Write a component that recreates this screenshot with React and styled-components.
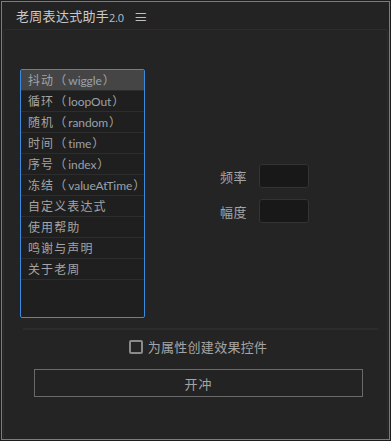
import React, { useState } from "react";
import styled, { createGlobalStyle } from "styled-components";

const Global = createGlobalStyle`
  html, body {
    margin: 0;
    padding: 0;
    background: #1d1d1d;
  }
  body {
    font-family: "Noto Sans CJK SC", sans-serif;
  }
`;

const Frame = styled.div`
  box-sizing: border-box;
  margin: 1px;
  width: 389px;
  height: 439px;
  border: 1px solid #3a8ae0;
  background: #232323;
  display: flex;
  flex-direction: column;
`;

const TitleBar = styled.div`
  height: 27px;
  display: flex;
  align-items: center;
  padding-left: 14px;
  color: #c9c9c9;
  font-size: 13px;
  letter-spacing: 0.3px;
`;

const Version = styled.span`
  font-family: "Open Sans", sans-serif;
  font-size: 11px;
  letter-spacing: -0.3px;
  margin-top: 3px;
  color: #b8c0cc;
`;

const Menu = styled.span`
  margin-left: 10px;
  font-size: 14px;
  color: #c0c0c0;
`;

const Panel = styled.div`
  flex: 1;
  margin: 0 1px;
  border: 1px solid #2c2c2c;
  border-bottom: none;
  border-radius: 3px 3px 0 0;
  background: #242424;
  padding: 39px 9px 0 16px;
  display: flex;
  flex-direction: column;
`;

const Top = styled.div`
  display: flex;
`;

const List = styled.div`
  box-sizing: border-box;
  width: 125px;
  height: 249px;
  border: 1px solid #3a8ae0;
  border-radius: 2px;
  background: #1f1f1f;
  display: flex;
  flex-direction: column;
  overflow: hidden;
`;

const Item = styled.div`
  height: 20px;
  flex-shrink: 0;
  border-bottom: 1px solid #2d2d2d;
  background: ${(p) => (p.active ? "#454545" : "transparent")};
  color: #a4a4a4;
  font-size: 12px;
  line-height: 20px;
  padding-left: 7px;
  white-space: nowrap;
  letter-spacing: 1.1px;
`;

const Latin = styled.span`
  font-family: "Lato", sans-serif;
  color: #9aa1aa;
  font-size: 12px;
  letter-spacing: -0.1px;
  margin: 0 1px 0 1px;
`;

const Params = styled.div`
  flex: 1;
  display: flex;
  flex-direction: column;
  justify-content: center;
  align-items: center;
  gap: 11px;
  padding-left: 6px;
`;

const Field = styled.label`
  display: flex;
  align-items: center;
  gap: 12px;
  color: #a4a4a4;
  font-size: 13px;
  letter-spacing: 0.4px;
`;

const Input = styled.input`
  box-sizing: border-box;
  width: 50px;
  height: 24px;
  background: #181818;
  border: 1px solid #333;
  border-radius: 3px;
  outline: none;
`;

const Divider = styled.div`
  height: 2px;
  background: #2c2c2c;
  margin: 10px 0 0 3px;
`;

const CheckRow = styled.label`
  display: flex;
  align-items: center;
  justify-content: center;
  gap: 5px;
  margin-top: 7px;
  color: #a4a4a4;
  font-size: 13px;
  letter-spacing: 0.3px;
  padding-right: 2px;
`;

const Box = styled.span`
  box-sizing: border-box;
  width: 14px;
  height: 14px;
  border: 2px solid #8a8a8a;
  border-radius: 2px;
`;

const Button = styled.button`
  box-sizing: border-box;
  margin: 13px 15px 0 14px;
  height: 28px;
  background: #232323;
  border: 1px solid #6a6a6a;
  color: #a4a4a4;
  font-family: "Noto Sans CJK SC", sans-serif;
  font-size: 13px;
  letter-spacing: 1px;
`;

const items = [
  ["抖动", "wiggle"],
  ["循环", "loopOut"],
  ["随机", "random"],
  ["时间", "time"],
  ["序号", "index"],
  ["冻结", "valueAtTime"],
  ["自定义表达式"],
  ["使用帮助"],
  ["鸣谢与声明"],
  ["关于老周"],
];

export default function App() {
  const [sel, setSel] = useState(0);
  return (
    <>
      <Global />
      <Frame>
        <TitleBar>
          老周表达式助手<Version>2.0</Version>
          <Menu>≡</Menu>
        </TitleBar>
        <Panel>
          <Top>
            <List>
              {items.map(([zh, en], i) => (
                <Item key={i} active={i === sel} onClick={() => setSel(i)}>
                  {zh}
                  {en && (
                    <>
                      （<Latin>{en}</Latin>）
                    </>
                  )}
                </Item>
              ))}
            </List>
            <Params>
              <Field>
                频率 <Input />
              </Field>
              <Field>
                幅度 <Input />
              </Field>
            </Params>
          </Top>
          <Divider />
          <CheckRow>
            <Box />
            为属性创建效果控件
          </CheckRow>
          <Button>开冲</Button>
        </Panel>
      </Frame>
    </>
  );
}
